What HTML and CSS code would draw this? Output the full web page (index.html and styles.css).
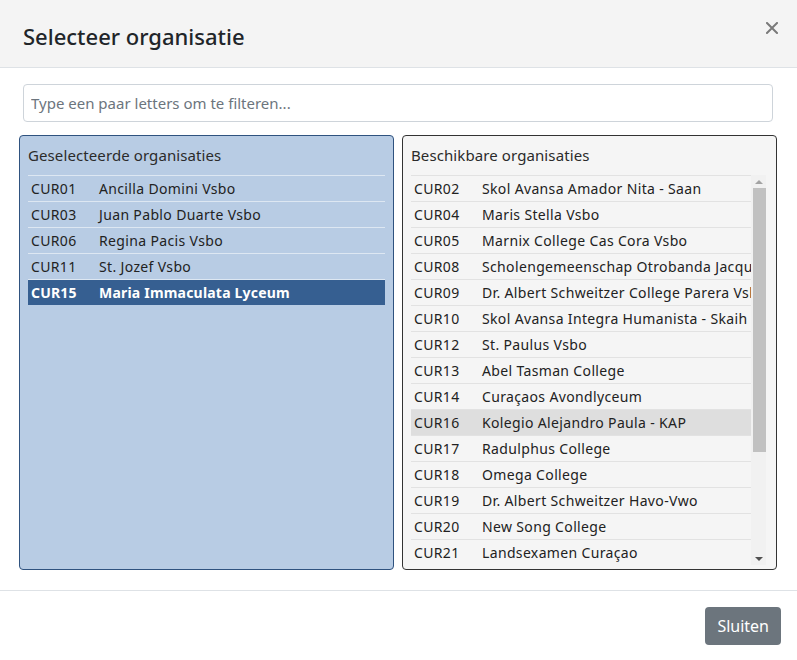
FILE: index.html
```html
<!DOCTYPE html>
<html lang="nl">
<head>
<meta charset="utf-8">
<title>Selecteer organisatie</title>
<link rel="stylesheet" href="styles.css">
</head>
<body>
<div class="modal">
  <div class="modal-header">
    <h4 class="modal-title">Selecteer organisatie</h4>
    <button class="close" type="button" aria-label="Sluiten">
      <svg width="12" height="12" viewBox="0 0 12 12"><path d="M1 1L11 11M11 1L1 11" stroke="#7a7a7a" stroke-width="2" stroke-linecap="square"/></svg>
    </button>
  </div>
  <div class="modal-body">
    <input class="filter" type="text" placeholder="Type een paar letters om te filteren...">
    <div class="panels">
      <div class="panel panel-selected">
        <div class="panel-heading">Geselecteerde organisaties</div>
        <div class="list">
          <div class="row"><span class="code">CUR01</span><span class="name">Ancilla Domini Vsbo</span></div>
          <div class="row"><span class="code">CUR03</span><span class="name">Juan Pablo Duarte Vsbo</span></div>
          <div class="row"><span class="code">CUR06</span><span class="name">Regina Pacis Vsbo</span></div>
          <div class="row"><span class="code">CUR11</span><span class="name">St. Jozef Vsbo</span></div>
          <div class="row active"><span class="code">CUR15</span><span class="name">Maria Immaculata Lyceum</span></div>
        </div>
      </div>
      <div class="panel panel-available">
        <div class="panel-heading">Beschikbare organisaties</div>
        <div class="scroll-wrap">
          <div class="list">
            <div class="row"><span class="code">CUR02</span><span class="name">Skol Avansa Amador Nita - Saan</span></div>
            <div class="row"><span class="code">CUR04</span><span class="name">Maris Stella Vsbo</span></div>
            <div class="row"><span class="code">CUR05</span><span class="name">Marnix College Cas Cora Vsbo</span></div>
            <div class="row"><span class="code">CUR08</span><span class="name">Scholengemeenschap Otrobanda Jacques</span></div>
            <div class="row"><span class="code">CUR09</span><span class="name">Dr. Albert Schweitzer College Parera Vsbo</span></div>
            <div class="row"><span class="code">CUR10</span><span class="name">Skol Avansa Integra Humanista - Skaih</span></div>
            <div class="row"><span class="code">CUR12</span><span class="name">St. Paulus Vsbo</span></div>
            <div class="row"><span class="code">CUR13</span><span class="name">Abel Tasman College</span></div>
            <div class="row"><span class="code">CUR14</span><span class="name">Curaçaos Avondlyceum</span></div>
            <div class="row hover"><span class="code">CUR16</span><span class="name">Kolegio Alejandro Paula - KAP</span></div>
            <div class="row"><span class="code">CUR17</span><span class="name">Radulphus College</span></div>
            <div class="row"><span class="code">CUR18</span><span class="name">Omega College</span></div>
            <div class="row"><span class="code">CUR19</span><span class="name">Dr. Albert Schweitzer Havo-Vwo</span></div>
            <div class="row"><span class="code">CUR20</span><span class="name">New Song College</span></div>
            <div class="row"><span class="code">CUR21</span><span class="name">Landsexamen Curaçao</span></div>
          </div>
          <div class="scrollbar">
            <span class="arrow arrow-up"></span>
            <span class="thumb"></span>
            <span class="track-rest"></span>
            <span class="arrow arrow-down"></span>
          </div>
        </div>
      </div>
    </div>
  </div>
  <div class="modal-footer">
    <button class="btn" type="button">Sluiten</button>
  </div>
</div>
</body>
</html>
```

FILE: styles.css
```css
* { box-sizing: border-box; }
html, body { margin: 0; padding: 0; background: #fff; }
body {
  font-family: "Noto Sans", "Open Sans", sans-serif;
  color: #222;
}
.modal {
  width: 797px;
  height: 660px;
  display: flex;
  flex-direction: column;
  background: #fff;
}
.modal-header {
  height: 69px;
  background: #f4f4f4;
  border-bottom: 1px solid #dee2e6;
  display: flex;
  align-items: center;
  justify-content: space-between;
  padding: 0 19px 0 23px;
}
.modal-title {
  margin: 0;
  font-size: 22px;
  font-weight: 500;
  color: #212529;
  letter-spacing: 0;
  padding-top: 5px;
}
.close {
  border: 0;
  background: none;
  padding: 0;
  width: 12px;
  height: 12px;
  margin-bottom: 12px;
  display: flex;
}
.modal-body {
  padding: 16px 20px 20px 19px;
  display: flex;
  flex-direction: column;
  gap: 13px;
}
.filter {
  margin: 0 4px;
  height: 38px;
  border: 1px solid #ced4da;
  border-radius: 4px;
  padding: 0 7px;
  font-family: inherit;
  font-size: 15px;
  color: #495057;
}
.filter::placeholder { color: #6c757d; }
.panels {
  display: grid;
  grid-template-columns: 1fr 1fr;
  gap: 8px;
  height: 435px;
}
.panel {
  border-radius: 4px;
  padding: 0 8px;
  display: flex;
  flex-direction: column;
  overflow: hidden;
}
.panel-selected {
  background: #b8cce4;
  border: 1px solid #2f527f;
}
.panel-available {
  background: #f5f5f5;
  border: 1px solid #333;
  padding-right: 10px;
}
.panel-heading {
  padding: 8px 0;
  line-height: 23px;
  font-size: 15px;
  color: #2b2b2b;
  letter-spacing: 0.1px;
}
.list {
  font-size: 14px;
  letter-spacing: 0.35px;
  color: #222;
}
.row {
  height: 26px;
  border-top: 1px solid #e2e2e2;
  display: flex;
  align-items: center;
  padding-left: 3px;
  white-space: nowrap;
  overflow: hidden;
}
.panel-selected .row { border-top-color: #dde7f2; }
.code { width: 68px; flex: none; }
.name { flex: none; }
.row.active {
  background: #365f91;
  color: #fff;
  font-weight: 700;
  letter-spacing: 0.2px;
}
.row.hover { background: #dedede; }
.scroll-wrap {
  display: flex;
  height: 390px;
}
.scroll-wrap .list {
  flex: 1;
  min-width: 0;
  overflow: hidden;
}
.scrollbar {
  width: 15px;
  flex: none;
  background: #f1f1f1;
  display: flex;
  flex-direction: column;
  align-items: center;
}
.arrow {
  width: 15px;
  height: 13px;
  display: flex;
  align-items: center;
  justify-content: center;
  flex: none;
}
.arrow::before {
  content: "";
  border-left: 4px solid transparent;
  border-right: 4px solid transparent;
}
.arrow-up::before { border-bottom: 4px solid #a3a3a3; }
.arrow-down::before { border-top: 4px solid #505050; }
.thumb {
  width: 13px;
  height: 264px;
  margin-left: 1px;
  background: #c1c1c1;
  flex: none;
}
.track-rest { flex: 1; }
.modal-footer {
  margin-top: auto;
  border-top: 1px solid #dee2e6;
  height: 70px;
  display: flex;
  align-items: flex-start;
  justify-content: flex-end;
  padding: 16px 16px 0;
}
.btn {
  height: 38px;
  padding: 0 12px;
  border: 0;
  border-radius: 4px;
  background: #6c757d;
  color: #fff;
  font-family: inherit;
  font-size: 16px;
}
```
